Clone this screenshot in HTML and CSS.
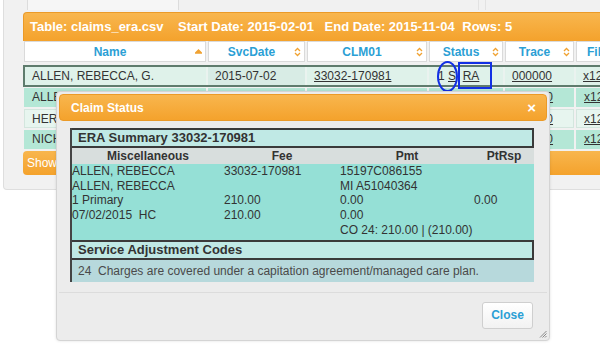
FILE: index.html
```html
<!DOCTYPE html>
<html lang="en">
<head>
    <meta charset="UTF-8">
    <title>claims_era.csv</title>
    <link rel="stylesheet" href="styles.css">
</head>
<body>
    <div class="panel">
        <div class="toolbar">
            <span class="tb tb-filter"></span>
            <span class="tb tb-gap"></span>
            <span class="tb tb-btn"></span>
        </div>

        <div class="grid">
            <div class="grid-title">
                <span class="gt gt-file">Table: claims_era.csv</span>
                <span class="gt gt-start">Start Date: 2015-02-01</span>
                <span class="gt gt-end">End Date: 2015-11-04</span>
                <span class="gt">Rows: 5</span>
            </div>

            <div class="grid-row grid-head">
                <div class="hcell"><span>Name</span>
                    <svg class="sort" width="7" height="10" viewBox="0 0 7 10"><polygon points="0.5,6 3.5,3 6.5,6" fill="#f0a232"/></svg>
                </div>
                <div class="hcell"><span>SvcDate</span>
                    <svg class="sort" width="7" height="10" viewBox="0 0 7 10"><polyline points="1,4 3.5,1.5 6,4" /><polyline points="1,6 3.5,8.5 6,6" /></svg>
                </div>
                <div class="hcell"><span>CLM01</span>
                    <svg class="sort" width="7" height="10" viewBox="0 0 7 10"><polyline points="1,4 3.5,1.5 6,4" /><polyline points="1,6 3.5,8.5 6,6" /></svg>
                </div>
                <div class="hcell"><span>Status</span>
                    <svg class="sort" width="7" height="10" viewBox="0 0 7 10"><polyline points="1,4 3.5,1.5 6,4" /><polyline points="1,6 3.5,8.5 6,6" /></svg>
                </div>
                <div class="hcell"><span>Trace</span>
                    <svg class="sort" width="7" height="10" viewBox="0 0 7 10"><polyline points="1,4 3.5,1.5 6,4" /><polyline points="1,6 3.5,8.5 6,6" /></svg>
                </div>
                <div class="hcell hcell-left"><span>File</span></div>
            </div>

            <div class="grid-row row-sel">
                <div class="cell">ALLEN, REBECCA, G.</div>
                <div class="cell cell-date">2015-07-02</div>
                <div class="cell"><a href="#">33032-170981</a></div>
                <div class="cell cell-status">1 <a href="#">S</a>&nbsp; <a href="#">RA</a></div>
                <div class="cell"><a href="#">000000</a></div>
                <div class="cell"><a href="#">x12_era_0702.txt</a></div>
            </div>

            <div class="grid-row row-odd">
                <div class="cell">ALLEN, REBECCA</div>
                <div class="cell">2015-07-02</div>
                <div class="cell"><a href="#">33032-170982</a></div>
                <div class="cell">1 <a href="#">S</a></div>
                <div class="cell"><a href="#">000000</a></div>
                <div class="cell"><a href="#">x12_era_0702.txt</a></div>
            </div>

            <div class="grid-row row-even">
                <div class="cell">HERNANDEZ, MARIA</div>
                <div class="cell">2015-08-14</div>
                <div class="cell"><a href="#">33032-171240</a></div>
                <div class="cell">1 <a href="#">S</a></div>
                <div class="cell"><a href="#">000000</a></div>
                <div class="cell"><a href="#">x12_era_0814.txt</a></div>
            </div>

            <div class="grid-row row-odd">
                <div class="cell">NICHOLS, JAMES</div>
                <div class="cell">2015-10-21</div>
                <div class="cell"><a href="#">33032-172015</a></div>
                <div class="cell">1 <a href="#">S</a></div>
                <div class="cell"><a href="#">000000</a></div>
                <div class="cell"><a href="#">x12_era_1021.txt</a></div>
            </div>

            <div class="grid-foot">Show 10 entries</div>
        </div>
    </div>

    <!-- пометки на скриншоте -->
    <span class="mark-circle"></span>
    <span class="mark-box"></span>

    <div class="dialog">
        <div class="dlg-title">
            <span>Claim Status</span>
            <span class="dlg-x">&times;</span>
        </div>

        <div class="dlg-body">
            <div class="era">
                <div class="box-head">ERA Summary 33032-170981</div>
                <table class="era-table">
                    <colgroup>
                        <col class="c1"><col class="c2"><col class="c3"><col>
                    </colgroup>
                    <thead>
                        <tr><th>Miscellaneous</th><th>Fee</th><th>Pmt</th><th>PtRsp</th></tr>
                    </thead>
                    <tbody>
                        <tr><td>ALLEN, REBECCA</td><td>33032-170981</td><td>15197C086155</td><td></td></tr>
                        <tr><td>ALLEN, REBECCA</td><td></td><td>MI A51040364</td><td></td></tr>
                        <tr><td>1 Primary</td><td>210.00</td><td>0.00</td><td>0.00</td></tr>
                        <tr><td>07/02/2015&nbsp; HC</td><td>210.00</td><td>0.00</td><td></td></tr>
                        <tr><td></td><td></td><td>CO 24: 210.00 | (210.00)</td><td></td></tr>
                        <tr class="pad"><td colspan="4"></td></tr>
                    </tbody>
                </table>
                <div class="box-head">Service Adjustment Codes</div>
                <div class="sac-row">24&nbsp;&nbsp;Charges are covered under a capitation agreement/managed care plan.</div>
            </div>
        </div>

        <div class="dlg-foot">
            <button class="btn-close">Close</button>
        </div>

        <svg class="grip" width="8" height="8" viewBox="0 0 8 8">
            <line x1="7.5" y1="1" x2="1" y2="7.5" />
            <line x1="7.5" y1="3.5" x2="3.5" y2="7.5" />
            <line x1="7.5" y1="6" x2="6" y2="7.5" />
        </svg>
    </div>
</body>
</html>
```

FILE: styles.css
```css
* {
    margin: 0;
    padding: 0;
    box-sizing: border-box;
}

body {
    font-family: "Liberation Sans", Arial, sans-serif;
    font-size: 12px;
    color: #333;
    background: #fff;
    overflow: hidden;
    width: 600px;
    height: 357px;
}

/* Панель с таблицей */
.panel {
    margin-left: 3px;
    width: 640px;
    height: 190px;
    padding-left: 19px;
    background: #f1f1f1;
    border: 1px solid #dedede;
    border-top: none;
    border-radius: 0 0 4px 4px;
}

.toolbar {
    display: flex;
    height: 10px;
}

.tb {
    display: block;
    height: 10px;
}

.tb-filter {
    margin-left: 4px;
    width: 152px;
    border-left: 1px solid #dcdcdc;
    border-right: 1px solid #dcdcdc;
    background: #f6f6f6;
}

.tb-gap {
    width: 299px;
}

.tb-btn {
    width: 8px;
    border-left: 1px solid #e2e2e2;
    border-right: 1px solid #e2e2e2;
}

.grid {
    margin-top: 2px;
}

.grid-title {
    height: 29px;
    line-height: 28px;
    padding-left: 6px;
    background: linear-gradient(#f8b64e, #f4a22c);
    border: 1px solid #eb9a27;
    border-bottom: none;
    border-radius: 4px 4px 0 0;
    color: #fff;
    font-size: 13px;
    font-weight: bold;
    white-space: nowrap;
}

.gt-file { margin-right: 11px; }
.gt-start { margin-right: 7px; }
.gt-end { margin-right: 4px; }

.grid-row {
    display: grid;
    grid-template-columns: 182px 97px 120px 74px 69px 120px;
    column-gap: 2px;
    margin-left: 1px;
}

.grid-head {
    height: 21px;
}

.hcell {
    display: flex;
    align-items: center;
    background: #fff;
    border: 1px solid #dadada;
    color: #2b9fd5;
    font-weight: bold;
    padding-right: 3px;
}

.hcell span {
    flex: 1;
    text-align: center;
}

.hcell-left span {
    text-align: left;
    padding-left: 10px;
}

.sort {
    fill: none;
    stroke: #f0a232;
    stroke-width: 1.3;
}

.cell {
    height: 19px;
    line-height: 18px;
    padding-left: 8px;
    white-space: nowrap;
    overflow: hidden;
}

.cell a {
    color: #333;
    text-decoration: underline;
}

.row-sel {
    margin: 3px 0 1px 0;
    grid-template-columns: 181px 97px 120px 74px 69px 120px;
    border: 2px solid #5f7c6d;
    background: #eaf3ef;
}

.row-sel .cell {
    height: 18px;
    background: #dff2ea;
    padding-left: 7px;
}

.row-sel .cell-date {
    background: #d8ece5;
}

.row-sel .cell-status {
    padding-left: 9px;
}

.row-odd {
    margin-bottom: 2px;
}

.row-odd .cell {
    background: #b4e7d6;
}

.row-even {
    margin-bottom: 2px;
}

.row-even .cell {
    background: #e7f5ef;
    border: 1px solid #d3e6de;
    padding-left: 7px;
}

.grid-foot {
    margin-top: 1px;
    height: 24px;
    line-height: 24px;
    padding-left: 4px;
    background: linear-gradient(#f8b64e, #f4a22c);
    border-radius: 4px 0 0 4px;
    color: #fff;
}

/* Пометки */
.mark-circle {
    position: absolute;
    left: 437px;
    top: 61px;
    width: 21px;
    height: 31px;
    border: 2px solid #1230e4;
    border-radius: 50%;
}

.mark-box {
    position: absolute;
    left: 458px;
    top: 62px;
    width: 34px;
    height: 27px;
    border: 2px solid #1230e4;
}

/* Диалог */
.dialog {
    position: absolute;
    left: 56px;
    top: 91px;
    width: 494px;
    padding: 2px;
    background: #ececec;
    border: 1px solid #d4d4d4;
    border-radius: 4px;
    box-shadow: 0 0 3px rgba(0, 0, 0, 0.12);
}

.dlg-title {
    display: flex;
    justify-content: space-between;
    align-items: center;
    height: 27px;
    padding: 0 10px 0 11px;
    background: linear-gradient(#f8b64e, #f4a22c);
    border: 1px solid #eb9a27;
    border-radius: 4px;
    color: #fff;
    font-weight: bold;
}

.dlg-x {
    font-size: 15px;
    line-height: 1;
}

.dlg-body {
    padding: 7px 13px 0 11px;
}

.era {
    border-left: 2px solid #444;
}

.box-head {
    height: 20px;
    line-height: 16px;
    padding-left: 6px;
    background: #c0e9e5;
    border: 2px solid #3a3a3a;
    border-left: none;
    font-size: 13px;
    font-weight: bold;
    color: #333;
}

.era-table {
    width: 100%;
    table-layout: fixed;
    border-collapse: collapse;
}

.c1 { width: 152px; }
.c2 { width: 116px; }
.c3 { width: 134px; }

.era-table th {
    height: 16px;
    line-height: 14px;
    background: #d8dedd;
    font-weight: bold;
    text-align: center;
}

.era-table td {
    height: 14.6px;
    line-height: 14px;
    padding: 0;
    background: #95e0d6;
    text-align: left;
    white-space: nowrap;
}

.era-table .pad td {
    height: 3px;
}

.sac-row {
    height: 22px;
    line-height: 22px;
    padding-left: 6px;
    background: #b7d9dc;
    color: #4a4a4a;
}

.dlg-foot {
    margin-top: 10px;
    border-top: 1px solid #dcdcdc;
    padding: 9px 14px 9px 0;
    display: flex;
    justify-content: flex-end;
}

.btn-close {
    width: 51px;
    height: 27px;
    background: linear-gradient(#fff, #f2f2f2);
    border: 1px solid #cfcfcf;
    border-radius: 3px;
    color: #2b9fd5;
    font-family: "Liberation Sans", Arial, sans-serif;
    font-size: 12px;
    font-weight: bold;
}

.grip {
    position: absolute;
    right: 2px;
    bottom: 2px;
    stroke: #888;
    stroke-width: 1;
}
```
